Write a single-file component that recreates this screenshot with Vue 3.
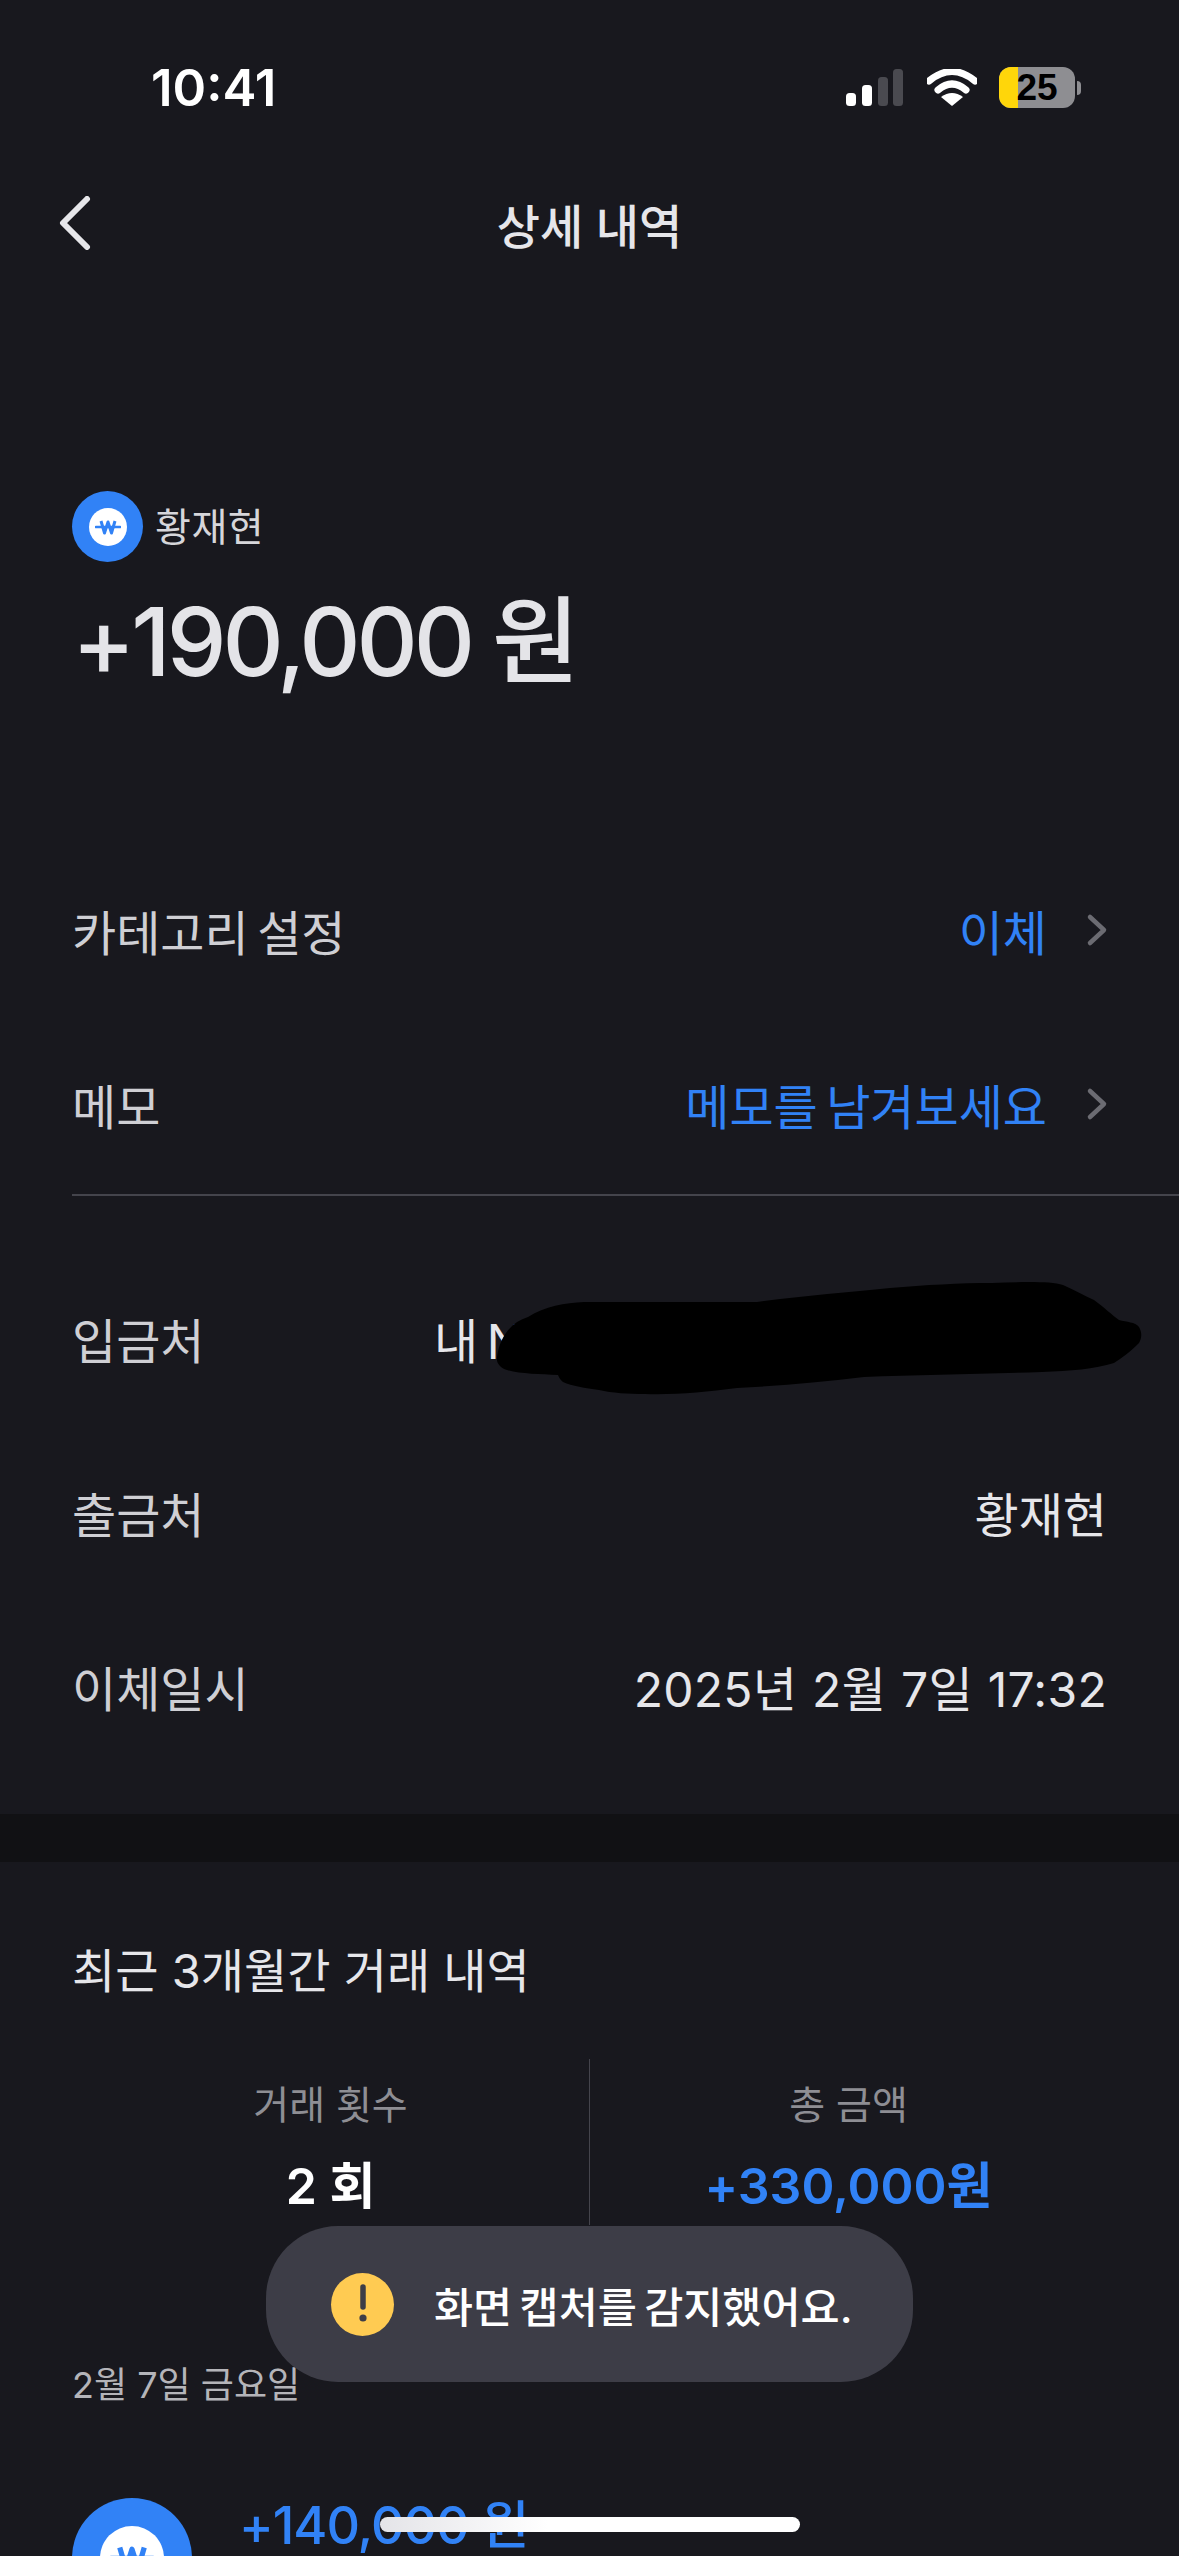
<script setup>
const stats = [
  { label: '거래 횟수', value: '2 회', blue: false },
  { label: '총 금액', value: '+330,000원', blue: true },
]
</script>

<template>
  <div class="page">
    <header class="status">
      <span class="time">10:41</span>
      <div class="indicators">
        <svg class="signal" width="57" height="37" viewBox="0 0 57 37">
          <rect x="0" y="24" width="10" height="13" rx="3.5" fill="#fff" />
          <rect x="16" y="16" width="10" height="21" rx="3.5" fill="#fff" />
          <rect x="32" y="8" width="10" height="29" rx="3.5" fill="#4a4a50" />
          <rect x="47" y="0" width="10" height="37" rx="3.5" fill="#4a4a50" />
        </svg>
        <svg class="wifi" width="50" height="37" viewBox="0 0 50 37">
          <path d="M2 12 Q25 -7 48 12" fill="none" stroke="#fff" stroke-width="7" stroke-linecap="round" />
          <path d="M11 21 Q25 9 39 21" fill="none" stroke="#fff" stroke-width="7" stroke-linecap="round" />
          <path d="M25 37 L14 28 Q25 20 36 28 Z" fill="#fff" />
        </svg>
        <div class="battery">
          <div class="battery-body">
            <span class="battery-fill"></span>
            <span class="battery-text">25</span>
          </div>
          <span class="battery-nub"></span>
        </div>
      </div>
    </header>

    <nav class="nav">
      <svg class="back" width="34" height="54" viewBox="0 0 34 54">
        <path d="M29 3 L5 27 L29 51" fill="none" stroke="#e6e6ea" stroke-width="6" stroke-linecap="round" stroke-linejoin="round" />
      </svg>
      <h1 class="title">상세 내역</h1>
    </nav>

    <section class="hero">
      <div class="account">
        <span class="won-badge">
          <span class="won-inner">
            <svg width="26" height="16" viewBox="0 0 26 16">
              <path d="M6 2 L9.5 14 L13 3 L16.5 14 L20 2" fill="none" stroke="#3182f6" stroke-width="3" stroke-linejoin="round" />
              <path d="M1 8 H25" stroke="#3182f6" stroke-width="2.6" stroke-linecap="round" />
            </svg>
          </span>
        </span>
        <span class="name">황재현</span>
      </div>
      <div class="amount">+190,000 원</div>
    </section>

    <section class="rows">
      <div class="row">
        <span class="label">카테고리 설정</span>
        <span class="link">이체
          <svg class="chev" width="22" height="34" viewBox="0 0 22 34"><path d="M4 4 L18 17 L4 30" fill="none" stroke="#6b6b72" stroke-width="4.5" stroke-linecap="round" stroke-linejoin="round" /></svg>
        </span>
      </div>
      <div class="row">
        <span class="label">메모</span>
        <span class="link">메모를 남겨보세요
          <svg class="chev" width="22" height="34" viewBox="0 0 22 34"><path d="M4 4 L18 17 L4 30" fill="none" stroke="#6b6b72" stroke-width="4.5" stroke-linecap="round" stroke-linejoin="round" /></svg>
        </span>
      </div>
    </section>

    <hr class="rule" />

    <section class="rows details">
      <div class="row">
        <span class="label">입금처</span>
        <span class="value masked">내 N</span>
        <svg class="scribble" width="660" height="116" viewBox="490 1280 660 116">
          <path d="M497 1357 C500 1335 512 1322 528 1317 C545 1306 565 1303 584 1302 L757 1302 C800 1296 850 1292 890 1288 C925 1285 960 1283 992 1283 C1020 1282 1050 1281 1063 1285 C1075 1290 1085 1296 1094 1300 C1105 1308 1112 1315 1119 1320 C1127 1322 1135 1322 1139 1327 C1142 1332 1142 1338 1139 1343 C1130 1352 1122 1358 1114 1363 C1095 1369 1070 1371 1042 1372 C985 1374 920 1375 864 1377 C820 1382 780 1386 737 1388 C705 1392 675 1395 645 1394 C628 1394 612 1393 599 1390 C585 1388 572 1386 563 1382 C560 1380 559 1377 558 1375 C540 1374 520 1374 507 1370 C500 1368 496 1363 497 1357 Z" fill="#000" />
        </svg>
      </div>
      <div class="row">
        <span class="label">출금처</span>
        <span class="value">황재현</span>
      </div>
      <div class="row">
        <span class="label">이체일시</span>
        <span class="value datetime">2025년 2월 7일 17:32</span>
      </div>
    </section>

    <div class="band"></div>

    <section class="recent">
      <h2 class="recent-title">최근 3개월간 거래 내역</h2>
      <div class="stats">
        <div v-for="s in stats" :key="s.label" class="stat">
          <span class="stat-label">{{ s.label }}</span>
          <span class="stat-value" :class="{ blue: s.blue }">{{ s.value }}</span>
        </div>
      </div>
      <div class="date">2월 7일 금요일</div>
      <div class="tx">
        <span class="tx-badge">
          <span class="tx-inner">
            <svg width="46" height="28" viewBox="0 0 26 16">
              <path d="M6 2 L9.5 14 L13 3 L16.5 14 L20 2" fill="none" stroke="#3182f6" stroke-width="3" stroke-linejoin="round" />
              <path d="M1 8 H25" stroke="#3182f6" stroke-width="2.6" stroke-linecap="round" />
            </svg>
          </span>
        </span>
        <span class="tx-amount">+140,000 원</span>
      </div>
    </section>

    <div class="toast">
      <span class="toast-icon">
        <svg width="10" height="40" viewBox="0 0 10 40">
          <path d="M5 3 V23" stroke="#3d3d47" stroke-width="5.5" stroke-linecap="round" />
          <circle cx="5" cy="34" r="3.6" fill="#3d3d47" />
        </svg>
      </span>
      <span class="toast-text">화면 캡처를 감지했어요.</span>
    </div>

    <div class="home"></div>
  </div>
</template>

<style scoped>
.page {
  position: relative;
  width: 1179px;
  height: 2556px;
  overflow: hidden;
  background: #18181e;
  color: #e6e6ea;
  font-family: Inter, "Noto Sans CJK KR", "Liberation Sans", sans-serif;
}
.status {
  height: 130px;
  box-sizing: border-box;
  padding: 67px 98px 0 151px;
  display: flex;
  justify-content: space-between;
  align-items: flex-start;
}
.time {
  font-size: 51px;
  font-weight: 600;
  line-height: 41px;
  color: #fff;
}
.indicators {
  display: flex;
  align-items: center;
  height: 41px;
}
.signal { margin-right: 24px; }
.wifi { margin-right: 22px; }
.battery { display: flex; align-items: center; gap: 2px; }
.battery-body {
  position: relative;
  width: 76px;
  height: 41px;
  border-radius: 12px;
  background: #8e8e92;
  overflow: hidden;
  display: flex;
  align-items: center;
  justify-content: center;
}
.battery-fill {
  position: absolute;
  left: 0;
  top: 0;
  bottom: 0;
  width: 19px;
  background: #ffd60a;
}
.battery-text {
  position: relative;
  font-family: "Liberation Sans", sans-serif;
  font-size: 37px;
  font-weight: 700;
  color: #000;
  line-height: 41px;
}
.battery-nub {
  width: 4px;
  height: 14px;
  border-radius: 0 4px 4px 0;
  background: #8e8e92;
}
.nav {
  position: relative;
  height: 194px;
  display: flex;
  align-items: center;
  justify-content: center;
}
.back {
  position: absolute;
  left: 58px;
  top: 66px;
}
.title {
  margin: 0;
  font-size: 47px;
  font-weight: 500;
  line-height: 60px;
  color: #e6e6ea;
}
.hero {
  height: 522px;
  box-sizing: border-box;
  padding: 167px 72px 0;
}
.account {
  display: flex;
  align-items: center;
  gap: 12px;
}
.won-badge {
  width: 71px;
  height: 71px;
  border-radius: 50%;
  background: #3182f6;
  display: flex;
  align-items: center;
  justify-content: center;
}
.won-inner {
  width: 38px;
  height: 38px;
  border-radius: 50%;
  background: #fff;
  display: flex;
  align-items: center;
  justify-content: center;
}
.name {
  font-size: 39px;
  line-height: 71px;
  letter-spacing: 0.5px;
  color: #d6d6da;
}
.amount {
  margin-top: 22px;
  font-size: 95px;
  font-weight: 500;
  line-height: 115px;
  letter-spacing: -4.1px;
  color: #e4e4e8;
  white-space: nowrap;
}
.rows { padding: 0 72px; }
.row {
  position: relative;
  height: 174px;
  box-sizing: border-box;
  padding-bottom: 7px;
  display: flex;
  align-items: center;
  justify-content: space-between;
  font-size: 48px;
  word-spacing: -5px;
}
.label { color: #cfcfd4; }
.link {
  display: flex;
  align-items: center;
  gap: 39px;
  color: #3182f6;
}
.chev { margin-right: -1px; }
.rule {
  margin: 0 0 0 72px;
  border: 0;
  height: 1.5px;
  background: #44444c;
}
.details { padding-top: 59px; }
.value { color: #e6e6ea; white-space: nowrap; }
.masked { width: 673px; }
.datetime { word-spacing: 1px; letter-spacing: 0.3px; }
.scribble {
  position: absolute;
  left: 418px;
  top: 25px;
}
.band { height: 48px; margin-top: 37px; background: #111114; }
.recent { padding: 85px 72px 0; }
.recent-title {
  margin: 0;
  font-size: 47px;
  font-weight: 400;
  line-height: 48px;
  color: #e6e6ea;
}
.stats {
  margin-top: 64px;
  height: 166px;
  display: grid;
  grid-template-columns: 517px 518px;
}
.stat {
  display: flex;
  flex-direction: column;
  align-items: center;
  padding-top: 22px;
  box-sizing: border-box;
}
.stat + .stat { border-left: 1.5px solid #44444c; }
.stat-label {
  font-size: 39px;
  line-height: 48px;
  color: #8e8e94;
}
.stat-value {
  margin-top: 29px;
  font-size: 50px;
  font-weight: 600;
  line-height: 56px;
  color: #fff;
}
.stat-value.blue { color: #3182f6; }
.date {
  margin-top: 136px;
  font-size: 36px;
  line-height: 48px;
  color: #b4b4b9;
}
.tx {
  margin-top: 89px;
  display: flex;
  gap: 47px;
}
.tx-badge {
  width: 120px;
  height: 120px;
  flex: none;
  border-radius: 50%;
  background: #3182f6;
  display: flex;
  align-items: center;
  justify-content: center;
}
.tx-inner {
  width: 64px;
  height: 64px;
  border-radius: 50%;
  background: #fff;
  display: flex;
  align-items: center;
  justify-content: center;
}
.tx-amount {
  font-size: 52px;
  font-weight: 500;
  line-height: 56px;
  letter-spacing: -1px;
  color: #3182f6;
}
.toast {
  position: absolute;
  left: 266px;
  top: 2226px;
  width: 647px;
  height: 156px;
  box-sizing: border-box;
  padding-left: 65px;
  border-radius: 72px;
  background: #3d3d47;
  display: flex;
  align-items: center;
  gap: 40px;
}
.toast-icon {
  width: 63px;
  height: 63px;
  border-radius: 50%;
  background: #ffcb52;
  display: flex;
  align-items: center;
  justify-content: center;
}
.toast-text {
  font-size: 42.5px;
  font-weight: 500;
  word-spacing: -4px;
  color: #fff;
  white-space: nowrap;
}
.home {
  position: absolute;
  left: 380px;
  top: 2517px;
  width: 420px;
  height: 15px;
  border-radius: 8px;
  background: linear-gradient(90deg, #e4e4e8, #fff 40%);
}
</style>

<style>
html, body { margin: 0; background: #18181e; }
</style>
